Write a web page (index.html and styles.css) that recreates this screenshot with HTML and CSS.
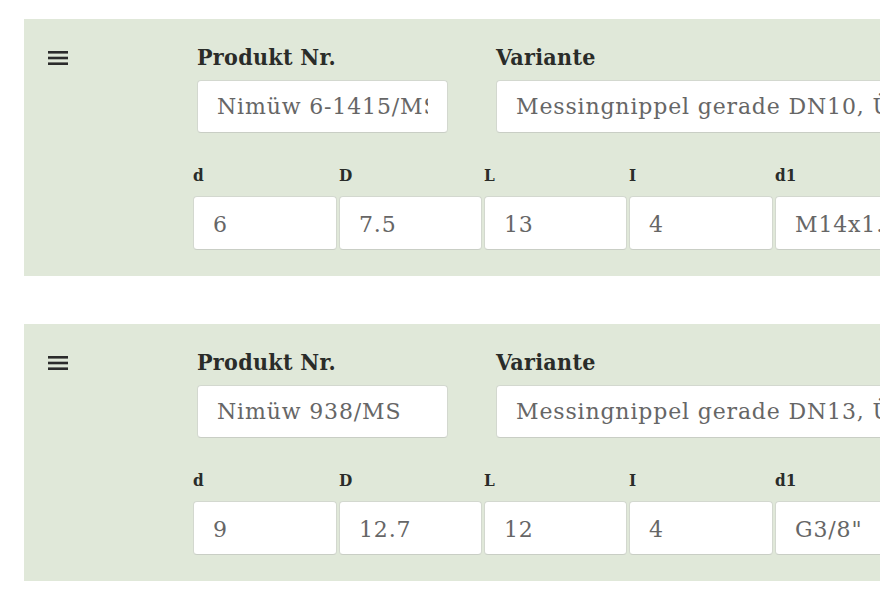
FILE: index.html
```html
<!DOCTYPE html>
<html lang="de">
<head>
<meta charset="utf-8">
<title>Produkte</title>
<link rel="stylesheet" href="styles.css">
</head>
<body>
<div class="list">
  <section class="card">
    <div class="handle"><svg width="20" height="16" viewBox="0 0 20 16"><rect x="0" y="1" width="20" height="2.6" fill="#2b2b2b"/><rect x="0" y="6.7" width="20" height="2.6" fill="#2b2b2b"/><rect x="0" y="12.4" width="20" height="2.6" fill="#2b2b2b"/></svg></div>
    <div class="body">
      <div class="top">
        <div class="field nr">
          <label class="lbl">Produkt Nr.</label>
          <div class="inp"><span class="val">Nimüw 6-1415/MS</span></div>
        </div>
        <div class="field var">
          <label class="lbl">Variante</label>
          <div class="inp"><span class="val">Messingnippel gerade DN10, Überwurfmutter</span></div>
        </div>
      </div>
      <div class="dims">
        <div class="dim"><span class="dlbl">d</span><div class="inp small"><span class="val">6</span></div></div>
        <div class="dim"><span class="dlbl">D</span><div class="inp small"><span class="val">7.5</span></div></div>
        <div class="dim"><span class="dlbl">L</span><div class="inp small"><span class="val">13</span></div></div>
        <div class="dim"><span class="dlbl">I</span><div class="inp small"><span class="val">4</span></div></div>
        <div class="dim"><span class="dlbl">d1</span><div class="inp small"><span class="val">M14x1.5</span></div></div>
      </div>
    </div>
  </section>
  <section class="card">
    <div class="handle"><svg width="20" height="16" viewBox="0 0 20 16"><rect x="0" y="1" width="20" height="2.6" fill="#2b2b2b"/><rect x="0" y="6.7" width="20" height="2.6" fill="#2b2b2b"/><rect x="0" y="12.4" width="20" height="2.6" fill="#2b2b2b"/></svg></div>
    <div class="body">
      <div class="top">
        <div class="field nr">
          <label class="lbl">Produkt Nr.</label>
          <div class="inp"><span class="val">Nimüw 938/MS</span></div>
        </div>
        <div class="field var">
          <label class="lbl">Variante</label>
          <div class="inp"><span class="val">Messingnippel gerade DN13, Überwurfmutter</span></div>
        </div>
      </div>
      <div class="dims">
        <div class="dim"><span class="dlbl">d</span><div class="inp small"><span class="val">9</span></div></div>
        <div class="dim"><span class="dlbl">D</span><div class="inp small"><span class="val">12.7</span></div></div>
        <div class="dim"><span class="dlbl">L</span><div class="inp small"><span class="val">12</span></div></div>
        <div class="dim"><span class="dlbl">I</span><div class="inp small"><span class="val">4</span></div></div>
        <div class="dim"><span class="dlbl">d1</span><div class="inp small"><span class="val">G3/8"</span></div></div>
      </div>
    </div>
  </section>
</div>
</body>
</html>
```

FILE: styles.css
```css
html, body {
  margin: 0;
  padding: 0;
  background: #ffffff;
  overflow: hidden;
}
body {
  font-family: "DejaVu Serif", serif;
  color: #333;
}
.list {
  padding-top: 19px;
  padding-left: 24px;
  display: flex;
  flex-direction: column;
  gap: 48px;
}
.card {
  background: #e0e8d9;
  width: 1100px;
  height: 257px;
  box-sizing: border-box;
  display: flex;
  padding: 20px 0 0 24px;
}
.handle {
  width: 145px;
  flex: none;
  padding-top: 11px;
}
.handle svg { display: block; }
.body {
  flex: 1;
  display: flex;
  flex-direction: column;
}
.top {
  display: flex;
  gap: 48px;
  padding-left: 4px;
}
.field.nr { width: 251px; flex: none; }
.field.var { width: 600px; flex: none; }
.lbl {
  display: block;
  font-family: "DejaVu Serif Condensed", "DejaVu Serif", serif;
  font-size: 23px;
  font-weight: bold;
  line-height: 36px;
  letter-spacing: 0.3px;
  color: #2a2c29;
  margin-bottom: 5px;
}
.inp {
  box-sizing: border-box;
  display: flex;
  align-items: center;
  height: 53px;
  background: #fff;
  border: 1px solid #d3d8cf;
  border-bottom-color: #c9cec5;
  border-radius: 4px;
  padding: 1px 19px 0;
  font-size: 22px;
  letter-spacing: 0.85px;
  color: #666;
}
.val {
  display: block;
  flex: 1;
  min-width: 0;
  white-space: nowrap;
  overflow: hidden;
  line-height: 30px;
}
.dims {
  display: grid;
  grid-template-columns: 144px 143px 143px 144px 144px;
  gap: 2px;
  margin-top: 32px;
}
.dlbl {
  display: block;
  font-family: "DejaVu Serif Condensed", "DejaVu Serif", serif;
  font-size: 17px;
  font-weight: bold;
  line-height: 20px;
  color: #2a2c29;
  margin-bottom: 11px;
}
.inp.small {
  height: 54px;
  padding-top: 3px;
}
```
